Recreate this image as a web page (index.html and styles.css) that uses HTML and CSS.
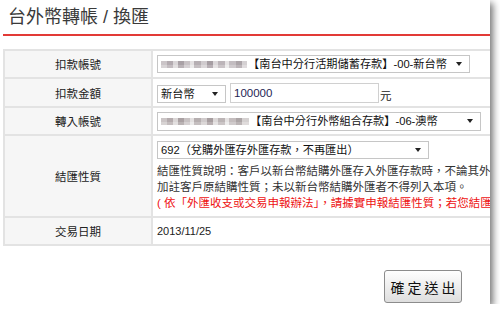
FILE: index.html
```html
<!DOCTYPE html>
<html lang="zh-Hant">
<head>
    <meta charset="UTF-8">
    <meta name="viewport" content="width=device-width, initial-scale=1.0">
    <title>台外幣轉帳 / 換匯</title>
    <link rel="stylesheet" href="styles.css">
</head>
<body>
    <div class="window">
        <h1 class="title">台外幣轉帳 / 換匯</h1>
        <table class="form">
            <tr class="row-account">
                <th>扣款帳號</th>
                <td>
                    <div class="select select-from">
                        <span class="label"><span class="mask"></span>【南台中分行活期儲蓄存款】-00-新台幣</span>
                        <span class="caret"></span>
                    </div>
                </td>
            </tr>
            <tr class="row-amount">
                <th>扣款金額</th>
                <td>
                    <div class="amount">
                        <div class="select select-currency">
                            <span class="label">新台幣</span>
                            <span class="caret"></span>
                        </div>
                        <input class="amount-input" type="text" value="100000">
                        <span class="unit">元</span>
                    </div>
                </td>
            </tr>
            <tr class="row-account">
                <th>轉入帳號</th>
                <td>
                    <div class="select select-to">
                        <span class="label"><span class="mask mask-alt"></span>【南台中分行外幣組合存款】-06-澳幣</span>
                        <span class="caret"></span>
                    </div>
                </td>
            </tr>
            <tr class="row-nature">
                <th>結匯性質</th>
                <td>
                    <div class="select select-nature">
                        <span class="label">692（兌購外匯存外匯存款，不再匯出）</span>
                        <span class="caret"></span>
                    </div>
                    <p class="note">結匯性質說明：客戶以新台幣結購外匯存入外匯存款時，不論其外匯存款後續用途為何，均應</p>
                    <p class="note">加註客戶原結購性質；未以新台幣結購外匯者不得列入本項。</p>
                    <p class="note warn">( 依「外匯收支或交易申報辦法」，請據實申報結匯性質；若您結匯性質申報不實 )</p>
                </td>
            </tr>
            <tr class="row-date">
                <th>交易日期</th>
                <td class="date">2013/11/25</td>
            </tr>
        </table>
        <div class="actions">
            <button class="submit" type="button">確定送出</button>
        </div>
    </div>
</body>
</html>
```

FILE: styles.css
```css
body {
    margin: 0;
    background: #fff;
    color: #333;
    font-family: "Liberation Sans", "Noto Sans CJK TC", sans-serif;
}
.window {
    width: 490px;
    height: 304px;
    background: #fff;
    overflow: hidden;
    box-shadow: 3px 3px 7px rgba(0, 0, 0, 0.55);
}
.title {
    margin: 0 0 0 3px;
    padding: 8px 0 8px 5px;
    font-size: 18px;
    line-height: 18px;
    font-weight: normal;
    color: #3a3a3a;
    border-bottom: 2px solid #e23a36;
}
.form {
    margin: 13px 0 0 3px;
    width: 620px;
    border-collapse: collapse;
    table-layout: fixed;
    font-size: 11.5px;
}
.form th, .form td {
    border: 2px solid #e3e3e3;
    padding: 0 0 0 4px;
    vertical-align: middle;
}
.form th {
    width: 146px;
    padding: 0;
    background: #f6f6f6;
    font-weight: normal;
    text-align: center;
    color: #222;
}
.row-account { height: 28px; }
.row-amount { height: 29px; }
.row-nature { height: 82px; }
.row-date { height: 28px; }
.row-nature td {
    vertical-align: top;
    padding-top: 5px;
}
.select {
    box-sizing: border-box;
    display: flex;
    align-items: center;
    justify-content: space-between;
    height: 18px;
    padding: 0 7px 0 3px;
    border: 1px solid #c6c6c6;
    background: #fff;
    color: #111;
    font-size: 11.2px;
    white-space: nowrap;
}
.select .label {
    display: flex;
    align-items: center;
    line-height: 16px;
}
.caret {
    flex: none;
    width: 0;
    height: 0;
    margin-left: 6px;
    border-left: 3.5px solid transparent;
    border-right: 3.5px solid transparent;
    border-top: 4px solid #222;
}
.select-from { width: 313px; }
.select-to { width: 324px; height: 19px; }
.select-currency { width: 69px; }
.select-nature { width: 272px; }
.mask {
    display: inline-block;
    width: 86px;
    height: 7px;
    margin-right: 1px;
    background:
        linear-gradient(90deg, #cbc5c8 0 6px, #b3abb0 6px 12px, #dad6d8 12px 17px, #a9a1a6 17px 23px, #c8c2c5 23px 29px, #e4e1e2 29px 33px, #b6afb3 33px 40px, #d0cbce 40px 46px, #a69ea3 46px 52px, #dcd8da 52px 57px, #bcb5b9 57px 64px, #e6e3e4 64px 68px, #c3bdc1 68px 75px, #aca5a9 75px 81px, #d5d1d3 81px 86px) top / 100% 4px no-repeat,
        linear-gradient(90deg, #d8d4d6 0 6px, #c4bdc1 6px 12px, #e3e0e1 12px 17px, #bab3b7 17px 23px, #d6d1d4 23px 29px, #ecebeb 29px 33px, #c5bfc2 33px 40px, #dcd8da 40px 46px, #b8b0b5 46px 52px, #e6e3e4 52px 57px, #cbc5c8 57px 64px, #eeeded 64px 68px, #d0cbce 68px 75px, #bcb5b9 75px 81px, #e0dcde 81px 86px) bottom / 100% 3px no-repeat;
}
.mask-alt {
    width: 88px;
    filter: hue-rotate(30deg);
}
.amount {
    display: flex;
    align-items: flex-end;
}
.amount-input {
    box-sizing: border-box;
    width: 149px;
    height: 20px;
    margin: 0 1px 0 4px;
    padding: 0 3px;
    border: 1px solid #d0d0d0;
    font-family: "Liberation Sans", sans-serif;
    font-size: 11.5px;
    color: #1f1f55;
}
.unit {
    line-height: 14px;
    color: #222;
}
.note {
    margin: 0;
    line-height: 16px;
    white-space: nowrap;
    color: #333;
}
.note:first-of-type {
    margin-top: 4px;
}
.warn {
    color: #ee1111;
}
.date {
    font-size: 11px;
    color: #222;
}
.actions {
    display: flex;
    justify-content: flex-end;
    margin-top: 24px;
    padding-right: 28px;
}
.submit {
    width: 78px;
    height: 33px;
    padding: 0 0 0 3px;
    border: 1px solid #8c8c8c;
    border-radius: 3px;
    background: linear-gradient(#fefefe, #dedede);
    font-family: "Noto Sans CJK TC", sans-serif;
    font-size: 14px;
    letter-spacing: 3px;
    color: #111;
}
```
